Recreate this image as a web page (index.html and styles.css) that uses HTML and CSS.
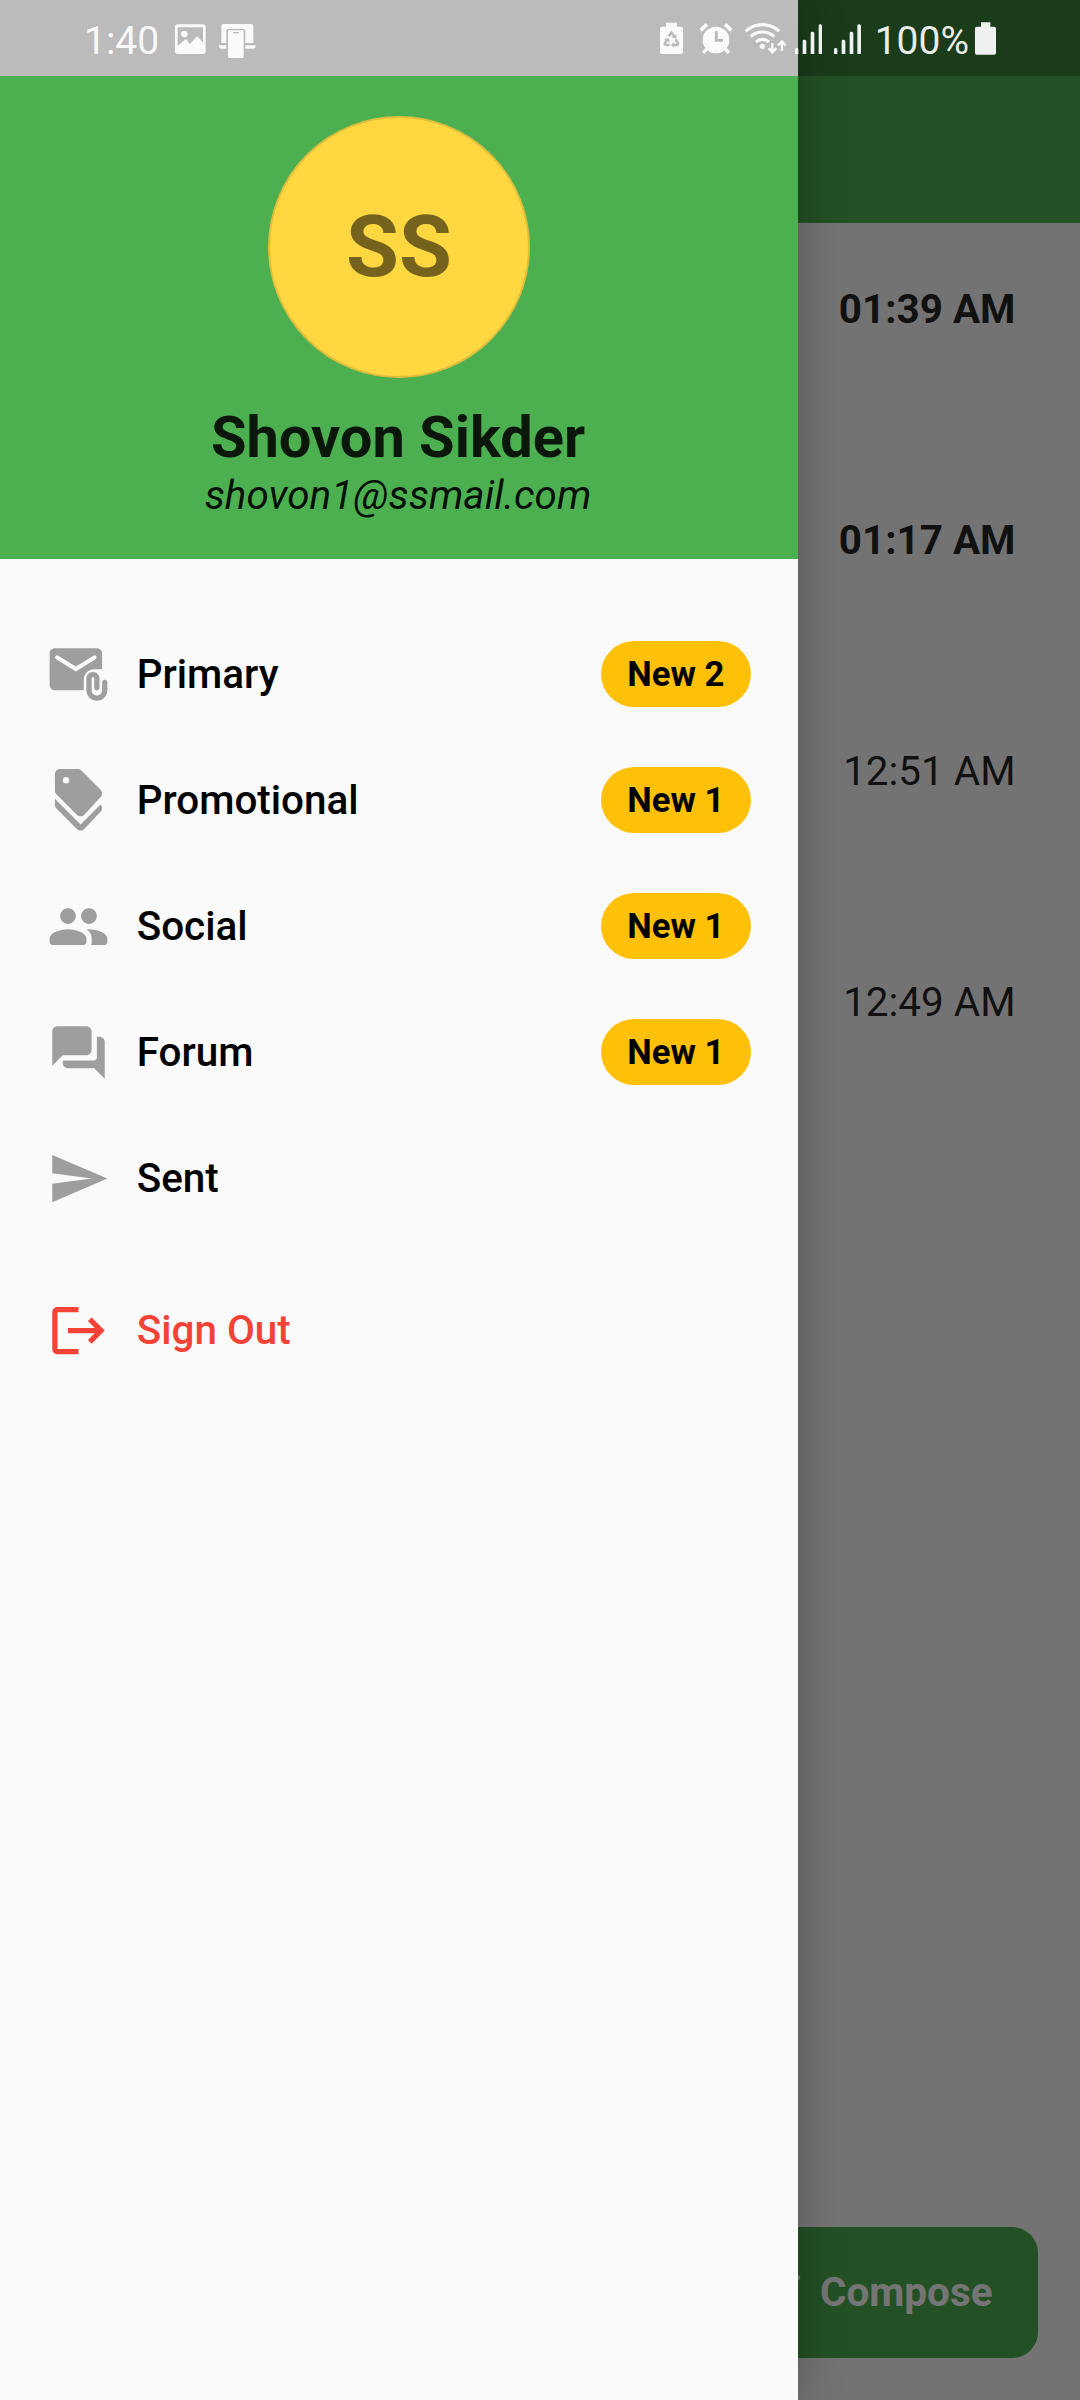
FILE: index.html
```html
<!DOCTYPE html>
<html lang="en">
<head>
<meta charset="utf-8">
<title>Mail</title>
<link rel="stylesheet" href="styles.css">
</head>
<body>
<div class="screen">
  <main class="inbox">
    <div class="appbar"></div>
    <ul class="mails">
      <li class="mail unread">01:39 AM</li>
      <li class="mail unread">01:17 AM</li>
      <li class="mail">12:51 AM</li>
      <li class="mail">12:49 AM</li>
    </ul>
    <button class="compose">
      <svg class="icon" viewBox="0 0 24 24"><path d="M3 17.46v3.04c0 .28.22.5.5.5h3.04c.13 0 .26-.05.35-.15L17.81 9.94l-3.75-3.75L3.15 17.1c-.1.1-.15.22-.15.36zM20.71 7.04a1 1 0 0 0 0-1.41l-2.34-2.34a1 1 0 0 0-1.41 0l-1.83 1.83 3.75 3.75 1.83-1.83z"/></svg>
      <span>Compose</span>
    </button>
  </main>
  <div class="scrim"></div>
  <aside class="drawer">
    <header class="profile">
      <div class="avatar">SS</div>
      <div class="name">Shovon Sikder</div>
      <div class="email">shovon1@ssmail.com</div>
    </header>
    <nav class="menu">
      <a class="item">
        <svg class="icon" viewBox="0 0 24 24"><path d="M21 10V4c0-1.1-.9-2-2-2H3c-1.1 0-2 .9-2 2v12c0 1.1.9 2 2 2h11v-4c0-2.21 1.79-4 4-4h3z"/><path class="fold" d="M3.9 5.5 11 9.9l7.1-4.4"/><path d="M22 14c-.55 0-1 .45-1 1v3c0 1.1-.9 2-2 2s-2-.9-2-2v-4.5c0-.28.22-.5.5-.5s.5.22.5.5V17c0 .55.45 1 1 1s1-.45 1-1v-3.5c0-1.38-1.12-2.5-2.5-2.5S15 12.12 15 13.5V18c0 2.21 1.79 4 4 4s4-1.79 4-4v-3c0-.55-.45-1-1-1z"/></svg>
        <span class="label">Primary</span><span class="badge">New 2</span>
      </a>
      <a class="item">
        <svg class="icon" viewBox="0 0 24 24"><path fill-rule="evenodd" d="M5 0h6.7c.53 0 1.04.21 1.41.59l7.3 7.3c.78.78.78 2.04 0 2.82l-6.2 6.7c-.78.78-2.04.78-2.82 0l-7.8-7.8C3.2 9.24 3 8.75 3 8.2V2c0-1.1.9-2 2-2zm2.25 3a1.25 1.25 0 1 0 0 2.5 1.25 1.25 0 0 0 0-2.5z"/><path d="M3 11.35l9.8 9.75 7.6-7.6c.78.78.78 2.04 0 2.82l-6.2 6.5c-.78.78-2.04.78-2.82 0l-7.8-7.8C3.2 14.64 3 14.15 3 13.6z"/></svg>
        <span class="label">Promotional</span><span class="badge">New 1</span>
      </a>
      <a class="item">
        <svg class="icon" viewBox="0 0 24 24"><path d="M16 11c1.66 0 2.99-1.34 2.99-3S17.66 5 16 5c-1.66 0-3 1.34-3 3s1.34 3 3 3zm-8 0c1.66 0 2.99-1.34 2.99-3S9.66 5 8 5C6.34 5 5 6.34 5 8s1.34 3 3 3zm0 2c-2.33 0-7 1.17-7 3.5V18c0 .55.45 1 1 1h12c.55 0 1-.45 1-1v-1.5c0-2.33-4.67-3.5-7-3.5zm8 0c-.29 0-.62.02-.97.05.02.01.03.03.04.04 1.14.83 1.93 1.94 1.93 3.41V18c0 .35-.07.69-.18 1H22c.55 0 1-.45 1-1v-1.5c0-2.33-4.67-3.5-7-3.5z"/></svg>
        <span class="label">Social</span><span class="badge">New 1</span>
      </a>
      <a class="item">
        <svg class="icon" viewBox="0 0 24 24"><path d="M20 6h-1v8c0 .55-.45 1-1 1H6v1c0 1.1.9 2 2 2h10l4 4V8c0-1.1-.9-2-2-2zm-3 5V4c0-1.1-.9-2-2-2H4c-1.1 0-2 .9-2 2v13l4-4h9c1.1 0 2-.9 2-2z"/></svg>
        <span class="label">Forum</span><span class="badge">New 1</span>
      </a>
      <a class="item">
        <svg class="icon" viewBox="0 0 24 24"><path d="M2.01 21 23 12 2.01 3 2 10l15 2-15 2z"/></svg>
        <span class="label">Sent</span>
      </a>
      <a class="item signout">
        <svg class="icon" viewBox="0 0 24 24"><path d="M17 7l-1.41 1.41L18.17 11H8v2h10.17l-2.58 2.58L17 17l5-5zM4 5h8V3H4c-1.1 0-2 .9-2 2v14c0 1.1.9 2 2 2h8v-2H4z"/></svg>
        <span class="label">Sign Out</span>
      </a>
    </nav>
  </aside>
  <div class="statusbar">
    <span class="clock">1:40</span>
    <svg class="notices" viewBox="345 66 243 111">
      <path fill-rule="evenodd" d="M353 73h76q8 0 8 8v73q0 8-8 8h-76q-8 0-8-8V81q0-8 8-8zm0 9v56l21-19q3-2 6 0l10 13 19-21q3-2 6 0l14 17V82zM373 92a10 10 0 1 1 0 20 10 10 0 0 1 0-20z"/>
      <path fill-rule="evenodd" d="M489 72h86q5 0 5 5v52h-24V92q0-5-5-5h-47q-5 0-5 5v37h-15V77q0-5 5-5zM477 136h22v10h-14q-8 0-8-8zM556 136h31v2q0 8-8 8h-23zM508 91h39q4 0 4 4v75q0 4-4 4h-39q-4 0-4-4V95q0-4 4-4zm13 5q-2 0-2 2t2 2h14q2 0 2-2t-2-2z"/>
    </svg>
    <svg class="system" viewBox="60 66 603 102">
      <path d="M78 68h33v12h12q6 0 6 6v70q0 6-6 6H66q-6 0-6-6V86q0-6 6-6h12z"/>
      <g class="recycle"><path d="M86 109l8-11 9 12M107 118l7 12q1 5-4 5h-10M89 135H79q-6-1-4-6l6-11"/><path class="tip" d="M109 103v14l-14-5zM103 126v17l-11-8zM72 118l14-4 3 14z"/></g>
      <circle cx="228" cy="120" r="40"/>
      <path class="line" d="M182 91l19-18M255 73l19 18" stroke-width="11"/><path class="line" d="M200 147l-10 12M256 147l11 12" stroke-width="10"/>
      <path class="hand" d="M229 94v27h20"/>
      <circle cx="367" cy="139" r="8"/>
      <path class="line" stroke-width="9.5" d="M317 94q22-20 50-20t51 20M332 110q15-14 35-14t36 14M348 126q8-8 19-8t20 8"/>
      <path class="line" stroke-width="7" d="M397 129v24M426 153v-24"/><path d="M383 147l14 15 15-15-5-5-10 9-9-9zM411 134l15-15 14 15-5 5-9-9-10 9z"/>
      <path d="M465 148q0-4 5-4t5 4v14h-10zM488 123q0-4 5-4t6 4v39h-11zM512 99q0-4 5-4t6 4v63h-11zM536 77q0-4 5-4t5 4v85h-10zM582 148q0-4 5-4t5 4v14h-10zM605 123q0-4 5-4t6 4v39h-11zM629 99q0-4 5-4t6 4v63h-11zM652 77q0-4 5-4t6 4v85h-11z"/>
    </svg>
    <span class="percent">100%</span>
    <svg class="battery" viewBox="1005 66 63 99"><path d="M1023 67h28v13h12q5 0 5 5v74q0 5-5 5h-53q-5 0-5-5V85q0-5 5-5h13z"/></svg>
  </div>
</div>
</body>
</html>
```
FILE: styles.css
```css
* { box-sizing: border-box; }

body {
  margin: 0;
  font-family: Roboto, sans-serif;
  font-size: 40.43px;
  color: #000;
}

.screen {
  position: relative;
  width: 1080px;
  height: 2400px;
  overflow: hidden;
}

.icon {
  width: 63px;
  height: 63px;
  flex: none;
  fill: currentColor;
}

/* Inbox behind the drawer */
.inbox {
  height: 100%;
  display: flex;
  flex-direction: column;
  background: #fafafa;
}

.appbar { height: 223px; background: #4caf50; }

.mails {
  flex: 1;
  margin: 0;
  padding: 62px 64.5px 0 0;
  list-style: none;
  text-align: right;
}

.mail {
  height: 231px;
  line-height: 48px;
  color: rgba(0, 0, 0, .87);
}

.unread { font-weight: 700; }

.compose {
  align-self: flex-end;
  display: flex;
  align-items: center;
  gap: 12.5px;
  height: 131px;
  margin: 0 42px 42px 0;
  padding: 0 45.5px 1px 52px;
  border: 0;
  border-radius: 26px;
  background: #4caf50;
  color: #fff;
  font: 700 40.43px Roboto, sans-serif;
}

.scrim {
  position: absolute;
  inset: 0;
  background: rgba(0, 0, 0, .54);
}

/* Navigation drawer */
.drawer {
  position: absolute;
  inset: 0 auto 0 0;
  width: 798px;
  padding-top: 76px;
  background: #fafafa;
  box-shadow: 0 0 42px rgba(0, 0, 0, .25);
}

.profile {
  display: flex;
  flex-direction: column;
  align-items: center;
  height: 483px;
  padding-top: 39.5px;
  background: #4caf50;
}

.avatar {
  display: flex;
  align-items: center;
  justify-content: center;
  width: 262px;
  height: 262px;
  margin-bottom: 26px;
  border: 2px solid #dfbe3c;
  border-radius: 50%;
  background: #ffd740;
  color: rgba(0, 0, 0, .54);
  font-size: 86px;
  font-weight: 700;
}

.name {
  margin-left: -2px;
  font-size: 57.75px;
  font-weight: 700;
  line-height: 67.5px;
  color: rgba(0, 0, 0, .87);
}

.email {
  margin-left: -2px;
  line-height: 49px;
  font-style: italic;
  color: rgba(0, 0, 0, .92);
}

.menu { padding-top: 52px; }

.item {
  display: flex;
  align-items: center;
  height: 126px;
  padding: 0 47px 0 47.4px;
}

.item .icon { color: #9e9e9e; }

.fold {
  fill: none;
  stroke: #fafafa;
  stroke-width: 1.6;
  stroke-linecap: round;
}

.label {
  margin-left: 26.3px;
  font-weight: 500;
}

.badge {
  width: 150px;
  height: 66px;
  margin-left: auto;
  padding-left: 26.3px;
  border-radius: 33px;
  background: #ffc107;
  font-size: 34.65px;
  font-weight: 700;
  line-height: 66px;
}

.signout { margin-top: 26px; }
.signout,
.signout .icon { color: #f44336; }

/* System status bar */
.statusbar {
  position: absolute;
  inset: 0 0 auto 0;
  display: flex;
  align-items: center;
  height: 76px;
  padding: 4px 84px 0;
  background: rgba(0, 0, 0, .25);
  color: rgba(255, 255, 255, .93);
  font-size: 39px;
  line-height: 70px;
  fill: currentColor;
}

.clock,
.percent { padding-top: 2px; }

.notices { width: 81px; height: 37px; margin-left: 16px; }
.system { width: 201px; height: 34px; margin: 0 14px 2px auto; }
.battery { width: 21px; height: 33px; margin: 0 0 3px 6px; }

.line { fill: none; stroke: currentColor; }
.hand { fill: none; stroke: #bbb; stroke-width: 9; }
.recycle { fill: none; stroke: #bbb; stroke-width: 8; }
.tip { fill: #bbb; stroke: none; }
```
